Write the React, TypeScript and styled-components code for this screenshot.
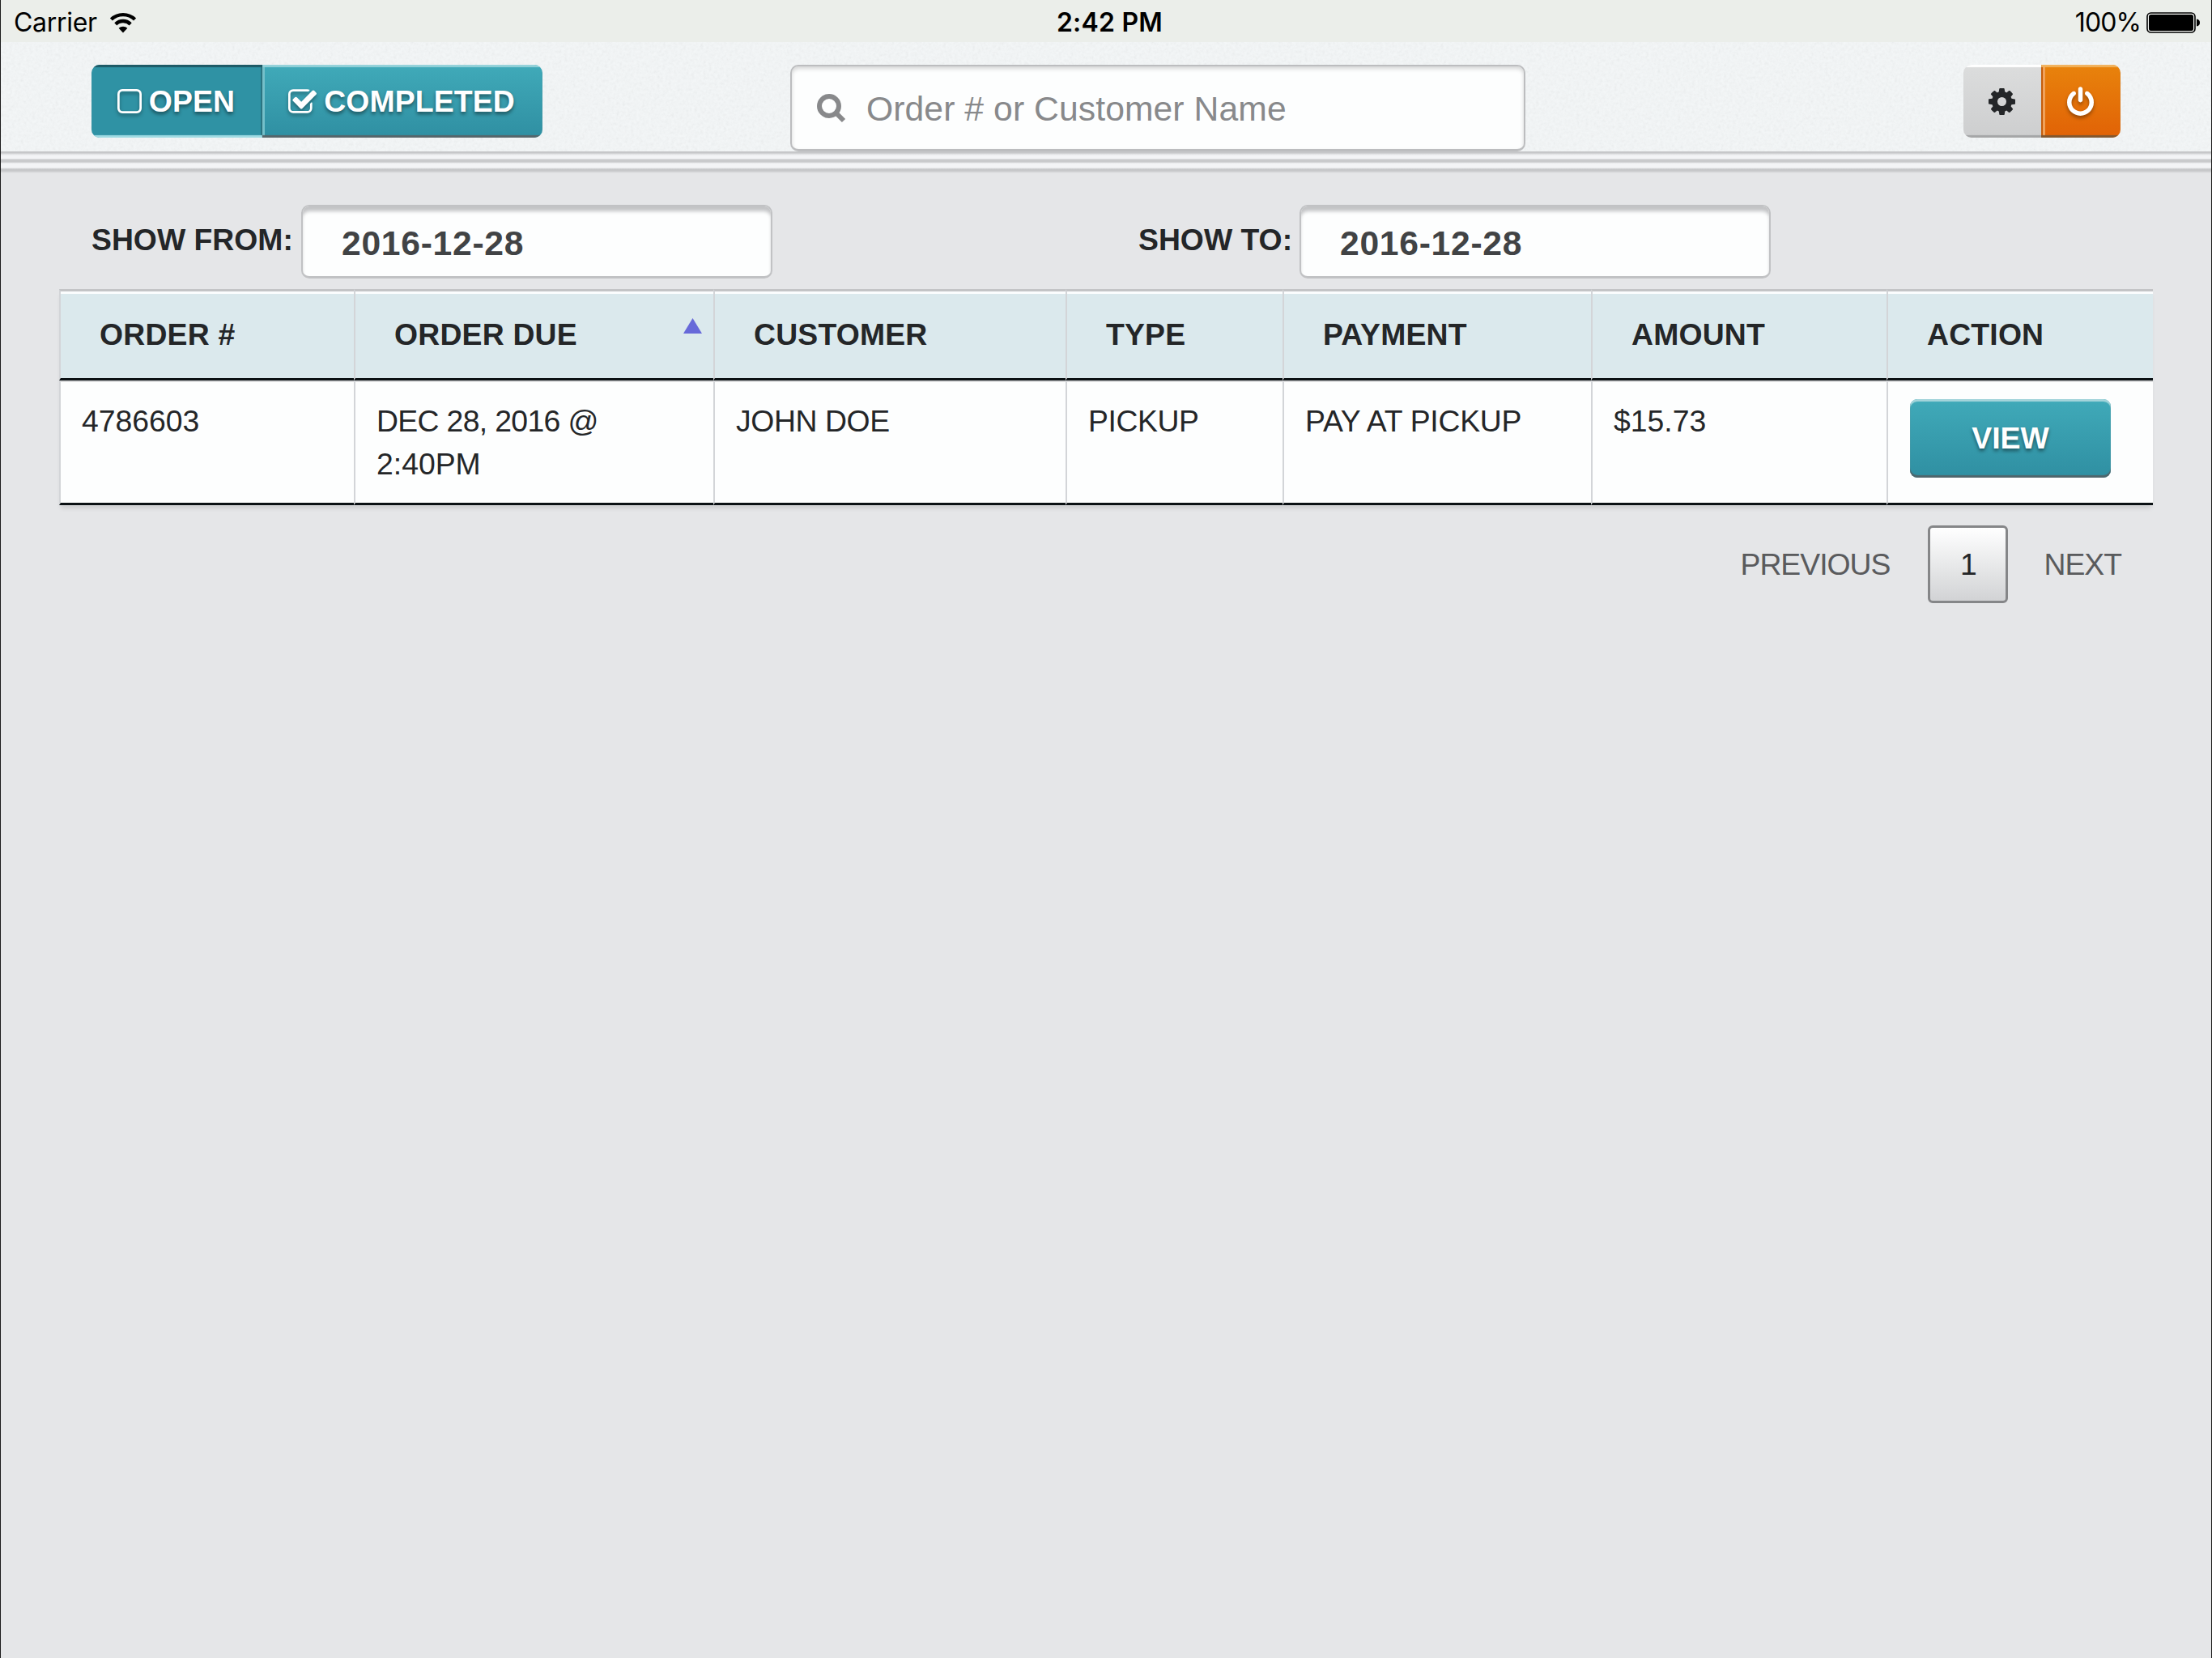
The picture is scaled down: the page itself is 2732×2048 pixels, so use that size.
import React from "react";
import styled, { createGlobalStyle, css } from "styled-components";

const color = {
  text: "#242628",
  muted: "#5a5b5d",
  page: "#e5e6e8",
  line: "#c3c4c6",
  divider: "#d3d5d8",
  head: "#dbe9ed",
  teal: "#2f92a4",
};

const font = {
  body: `"Liberation Sans", Arial, sans-serif`,
  system: `Inter, "Liberation Sans", sans-serif`,
};

const GlobalStyle = createGlobalStyle`
  * {
    box-sizing: border-box;
  }

  body {
    margin: 0;
    background: ${color.page};
  }
`;

const Screen = styled.div`
  width: 2732px;
  height: 2048px;
  overflow: hidden;
  border-left: 1px solid #1c1c1c;
  border-right: 1px solid #1c1c1c;
  background: ${color.page};
  color: ${color.text};
  font-family: ${font.body};
  font-size: 37.33px;
`;

const StatusBar = styled.div`
  display: grid;
  grid-template-columns: 1fr auto 1fr;
  align-items: center;
  height: 52px;
  padding: 4px 14px 0 16px;
  background: #ebeeea;
  color: #000;
  font-family: ${font.system};
  font-size: 32px;
  line-height: 48px;
`;

const Carrier = styled.div`
  display: flex;
  align-items: center;
  gap: 15px;
  letter-spacing: -0.3px;
`;

const Clock = styled.div`
  padding-left: 7px;
  font-weight: 600;
  letter-spacing: 0.2px;
`;

const Battery = styled.div`
  display: flex;
  align-items: center;
  justify-content: flex-end;
  gap: 7px;
  letter-spacing: -0.9px;
`;

const Toolbar = styled.header`
  position: relative;
  display: flex;
  align-items: flex-start;
  height: 135px;
  padding: 28px 112px 0;
  background: #f4f7f8;
`;

const Grain = styled.svg`
  position: absolute;
  inset: 0;
  width: 100%;
  height: 100%;
  opacity: 0.13;
`;

const Ridges = styled.div`
  height: 27px;
  background: linear-gradient(
    #c6c7c9 0 2px,
    #dcdddf 3px,
    #f3f4f6 5px 9px,
    #c9cacc 10px 13px,
    #f3f4f6 15px 20px,
    #c6c7c9 22px 24px,
    #dcdddf 26px,
    ${color.page} 27px
  );
`;

const ButtonGroup = styled.div`
  position: relative;
  display: flex;
  height: 90px;
  border-radius: 10px;
  overflow: hidden;
`;

type Tone = "pressed" | "teal" | "gray" | "orange";

const tones = {
  pressed: css`
    background: ${color.teal};
    color: #fff;
    box-shadow: inset 0 3px 1px #1d5a66, inset 0 -3px 1px #9fdbe3,
      inset -2px 0 0 #26727f;
    text-shadow: 0 3px 4px rgba(0, 0, 0, 0.45);
  `,
  teal: css`
    background: linear-gradient(#40aab9, #2f8fa2);
    color: #fff;
    box-shadow: inset 0 -3px 1px #56666b, inset 0 3px 1px #95d2da,
      inset 3px 0 0 #74c0ca;
    text-shadow: 0 3px 4px rgba(0, 0, 0, 0.45);
  `,
  gray: css`
    background: linear-gradient(#dcdddd, #cdcecf);
    color: ${color.text};
    box-shadow: inset 0 3px 1px #fff, inset 0 -3px 1px #a5a6a7;
  `,
  orange: css`
    background: linear-gradient(#e8830c, #e16206);
    color: #fff;
    box-shadow: inset 0 -3px 1px #82572f, inset 0 3px 1px #f2b35f,
      inset 2px 0 0 #c75a07, inset 5px 0 0 #f0a25a;
  `,
};

const GroupButton = styled.button<{ $tone: Tone; $width: number }>`
  display: flex;
  align-items: center;
  justify-content: center;
  width: ${({ $width }) => $width}px;
  padding: 0 2px 0 0;
  border: 0;
  font: bold 37.33px ${font.body};
  letter-spacing: 0.15px;
  ${({ $tone }) => tones[$tone]}
`;

const Label = styled.span`
  margin-left: 9px;
`;

const SearchBox = styled.div`
  position: relative;
  display: flex;
  align-items: center;
  width: 908px;
  height: 107px;
  margin: 0 auto 0 306px;
  padding: 2px 0 0 31px;
  border: 2px solid #bcbdbf;
  border-bottom-width: 3px;
  border-radius: 10px;
  background: #fdfefe;
  box-shadow: inset 0 3px 5px rgba(0, 0, 0, 0.16);
  color: #88898b;
  font-size: 42.67px;
  letter-spacing: 0.08px;
`;

const Placeholder = styled.span`
  margin-left: 25px;
`;

const Filters = styled.section`
  display: flex;
  height: 143px;
  padding: 39px 0 0 112px;
`;

const Field = styled.div<{ $width: number }>`
  display: flex;
  align-items: flex-start;
  justify-content: space-between;
  flex: none;
  width: ${({ $width }) => $width}px;
  margin-right: 452px;
`;

const FieldLabel = styled.label`
  font-weight: bold;
  line-height: 86px;
  white-space: nowrap;
`;

const DateInput = styled.div`
  width: 582px;
  height: 91px;
  padding: 3px 0 0 48px;
  border: 2px solid #c1c2c4;
  border-bottom-width: 3px;
  border-radius: 10px;
  background: #fdfefe;
  box-shadow: inset 0 7px 4px -1px #c3c4c6;
  color: #414345;
  font-size: 42.67px;
  font-weight: bold;
  letter-spacing: 0.7px;
  line-height: 84px;
`;

const Table = styled.table`
  width: 2586px;
  margin-left: 72px;
  border-spacing: 0;
  table-layout: fixed;
  box-shadow: 0 6px 5px -2px rgba(0, 0, 0, 0.1);
`;

const Th = styled.th<{ $width: number }>`
  width: ${({ $width }) => $width}px;
  height: 113px;
  padding: 0 0 0 48px;
  border-top: 3px solid ${color.line};
  border-bottom: 3px solid #0b1114;
  border-left: 2px solid ${color.divider};
  background: ${color.head};
  box-shadow: inset 0 3px 0 #fbfdfe;
  text-align: left;
  letter-spacing: 0.2px;
  line-height: 53px;
`;

const HeadContent = styled.div`
  display: flex;
  align-items: center;
  justify-content: space-between;
  padding-right: 14px;
`;

const SortArrow = styled.svg`
  margin-bottom: 22px;
`;

const Td = styled.td<{ $tracking?: number }>`
  height: 154px;
  padding: 24px 26px 0;
  border-bottom: 3px solid #0b1114;
  border-left: 2px solid ${color.divider};
  background: #fdfefe;
  box-shadow: inset 0 2px 0 #d9dadb;
  vertical-align: top;
  letter-spacing: ${({ $tracking = 0 }) => $tracking}px;
  line-height: 53.33px;
`;

const ActionCell = styled(Td)`
  padding: 23px 27px 0;
`;

const ViewButton = styled.button`
  display: block;
  width: 248px;
  height: 97px;
  padding: 0;
  border: 0;
  border-radius: 9px;
  background: linear-gradient(#40aab9, #2f8fa2);
  box-shadow: inset 0 -3px 1px #4f666c, inset 0 3px 1px #a5d5db;
  color: #fff;
  font: bold 37.33px ${font.body};
  text-shadow: 0 3px 4px rgba(0, 0, 0, 0.45);
`;

const Pager = styled.nav`
  display: flex;
  align-items: center;
  justify-content: flex-end;
  height: 96px;
  margin-top: 25px;
  padding-right: 111px;
  color: ${color.muted};
  letter-spacing: -1px;
`;

const PageNumber = styled.span`
  display: flex;
  align-items: center;
  justify-content: center;
  width: 99px;
  height: 96px;
  margin: 0 44px 0 47px;
  border: 3px solid #858688;
  border-radius: 6px;
  background: linear-gradient(#fff, #d2d3d5);
  color: ${color.text};
`;

const icons = {
  square: {
    box: "192 128 1408 1408",
    path: "M1312 256h-832q-66 0-113 47t-47 113v832q0 66 47 113t113 47h832q66 0 113-47t47-113v-832q0-66-47-113t-113-47zm288 160v832q0 119-84.5 203.5t-203.5 84.5h-832q-119 0-203.5-84.5t-84.5-203.5v-832q0-119 84.5-203.5t203.5-84.5h832q119 0 203.5 84.5t84.5 203.5z",
  },
  check: {
    box: "64 128 1664 1408",
    path: "M1472 930v318q0 119-84.5 203.5t-203.5 84.5h-832q-119 0-203.5-84.5t-84.5-203.5v-832q0-119 84.5-203.5t203.5-84.5h832q63 0 117 25 15 7 18 23 3 17-9 29l-49 49q-10 10-23 10-3 0-9-2-23-6-45-6h-832q-66 0-113 47t-47 113v832q0 66 47 113t113 47h832q66 0 113-47t47-113v-254q0-13 9-22l64-64q10-10 23-10 6 0 12 3 20 8 20 29zm231-489l-814 814q-24 24-57 24t-57-24l-430-430q-24-24-24-57t24-57l110-110q24-24 57-24t57 24l263 263 647-647q24-24 57-24t57 24l110 110q24 24 24 57t-24 57z",
  },
  cog: {
    box: "128 128 1536 1536",
    path: "M1152 896q0-106-75-181t-181-75-181 75-75 181 75 181 181 75 181-75 75-181zm512-109v222q0 12-8 23t-20 13l-185 28q-19 54-39 91 35 50 107 138 10 12 10 25t-9 23q-27 37-99 108t-94 71q-12 0-26-9l-138-108q-44 23-91 38-16 136-29 186-7 28-36 28h-222q-14 0-24.5-8.5t-11.5-21.5l-28-184q-49-16-90-37l-141 107q-10 9-25 9-14 0-25-11-126-114-165-168-7-10-7-23 0-12 8-23 15-21 51-66.5t54-70.5q-27-50-41-99l-183-27q-13-2-21-12.5t-8-23.5v-222q0-12 8-23t19-13l186-28q14-46 39-92-40-57-107-138-10-12-10-24 0-10 9-23 26-36 98.5-107.5t94.5-71.5q13 0 26 10l138 107q44-23 91-38 16-136 29-186 7-28 36-28h222q14 0 24.5 8.5t11.5 21.5l28 184q49 16 90 37l142-107q9-9 24-9 13 0 25 10 129 119 165 170 7 8 7 22 0 12-8 23-15 21-51 66.5t-54 70.5q26 50 41 98l183 28q13 2 21 12.5t8 23.5z",
  },
  power: {
    box: "128 0 1536 1664",
    path: "M1664 896q0 156-61 298t-164 245-245 164-298 61-298-61-245-164-164-245-61-298q0-182 80.5-343t226.5-270q43-32 95.5-25t83.5 50q32 42 24.5 94.5t-49.5 84.5q-98 74-151.5 181t-53.5 228q0 104 40.5 198.5t109.5 163.5 163.5 109.5 198.5 40.5 198.5-40.5 163.5-109.5 109.5-163.5 40.5-198.5q0-121-53.5-228t-151.5-181q-42-32-49.5-84.5t24.5-94.5q31-43 84-50t95 25q146 109 226.5 270t80.5 343zm-640-768v640q0 52-38 90t-90 38-90-38-38-90v-640q0-52 38-90t90-38 90 38 38 90z",
  },
};

interface IconProps {
  name: keyof typeof icons;
  width: number;
  height: number;
  shadow?: boolean;
}

const IconSvg = styled.svg<{ $shadow?: boolean }>`
  flex: none;
  fill: currentColor;
  filter: ${({ $shadow }) =>
    $shadow ? "drop-shadow(0 3px 2px rgba(0, 0, 0, 0.35))" : "none"};
`;

const Icon: React.FC<IconProps> = ({ name, width, height, shadow }) => (
  <IconSvg
    width={width}
    height={height}
    viewBox={icons[name].box}
    $shadow={shadow}
  >
    <path d={icons[name].path} />
  </IconSvg>
);

const SearchIcon = () => (
  <svg width="36" height="36" viewBox="0 0 36 36">
    <g fill="none" stroke="#88898b">
      <circle cx="15" cy="15" r="12" strokeWidth="6" />
      <path d="M23.5 23.5L33 33" strokeWidth="6" />
    </g>
  </svg>
);

const WifiIcon = () => (
  <svg width="34" height="26" viewBox="0 0 34 26">
    <g fill="none" stroke="#000" strokeWidth="4.4">
      <path d="M2.4 9a21 21 0 0 1 29.2 0" />
      <path d="M7.8 14.8a13.2 13.2 0 0 1 18.4 0" />
    </g>
    <path d="M17 25.4l-5.4-5.6a7.8 7.8 0 0 1 10.8 0z" />
  </svg>
);

const BatteryIcon = () => (
  <svg width="66" height="26" viewBox="0 0 66 26">
    <rect x="1" y="1" width="59" height="24" rx="4.5" fill="#f4f6f3" stroke="#000" strokeWidth="1.6" />
    <rect x="3" y="3" width="55" height="20" rx="2.5" />
    <path d="M62 8.5q4 .8 4 4.5t-4 4.5z" />
  </svg>
);

const DueDay = styled.span`
  letter-spacing: -0.65px;
`;

const columns = [
  { title: "ORDER #", width: 364 },
  { title: "ORDER DUE", width: 444, sorted: true },
  { title: "CUSTOMER", width: 435 },
  { title: "TYPE", width: 268 },
  { title: "PAYMENT", width: 381 },
  { title: "AMOUNT", width: 365 },
  { title: "ACTION", width: 329 },
];

const orders = [
  {
    id: "4786603",
    day: "DEC 28, 2016 @",
    time: "2:40PM",
    customer: "JOHN DOE",
    type: "PICKUP",
    payment: "PAY AT PICKUP",
    amount: "$15.73",
  },
];

const App: React.FC = () => (
  <Screen>
    <GlobalStyle />
    <StatusBar>
      <Carrier>
        Carrier
        <WifiIcon />
      </Carrier>
      <Clock>2:42 PM</Clock>
      <Battery>
        100%
        <BatteryIcon />
      </Battery>
    </StatusBar>

    <Toolbar>
      <Grain>
        <filter id="grain">
          <feTurbulence type="fractalNoise" baseFrequency="0.28" numOctaves="3" />
          <feColorMatrix type="saturate" values="0" />
        </filter>
        <rect width="100%" height="100%" filter="url(#grain)" />
      </Grain>
      <ButtonGroup>
        <GroupButton $tone="pressed" $width={211}>
          <Icon name="square" width={30} height={30} shadow />
          <Label>OPEN</Label>
        </GroupButton>
        <GroupButton $tone="teal" $width={346}>
          <Icon name="check" width={35} height={30} shadow />
          <Label>COMPLETED</Label>
        </GroupButton>
      </ButtonGroup>
      <SearchBox>
        <SearchIcon />
        <Placeholder>Order # or Customer Name</Placeholder>
      </SearchBox>
      <ButtonGroup>
        <GroupButton $tone="gray" $width={96}>
          <Icon name="cog" width={33} height={33} />
        </GroupButton>
        <GroupButton $tone="orange" $width={98}>
          <Icon name="power" width={33} height={36} shadow />
        </GroupButton>
      </ButtonGroup>
    </Toolbar>
    <Ridges />

    <Filters>
      <Field $width={841}>
        <FieldLabel>SHOW FROM:</FieldLabel>
        <DateInput>2016-12-28</DateInput>
      </Field>
      <Field $width={781}>
        <FieldLabel>SHOW TO:</FieldLabel>
        <DateInput>2016-12-28</DateInput>
      </Field>
    </Filters>

    <Table>
      <thead>
        <tr>
          {columns.map(({ title, width, sorted }) => (
            <Th key={title} $width={width}>
              <HeadContent>
                {title}
                {sorted && (
                  <SortArrow width="23" height="19" viewBox="0 0 23 19">
                    <path d="M11.5 0L23 19H0z" fill="#6769d9" />
                  </SortArrow>
                )}
              </HeadContent>
            </Th>
          ))}
        </tr>
      </thead>
      <tbody>
        {orders.map((order) => (
          <tr key={order.id}>
            <Td>{order.id}</Td>
            <Td>
              <DueDay>{order.day}</DueDay> {order.time}
            </Td>
            <Td $tracking={-0.4}>{order.customer}</Td>
            <Td $tracking={-0.4}>{order.type}</Td>
            <Td $tracking={-0.25}>{order.payment}</Td>
            <Td>{order.amount}</Td>
            <ActionCell>
              <ViewButton>VIEW</ViewButton>
            </ActionCell>
          </tr>
        ))}
      </tbody>
    </Table>

    <Pager>
      <span>PREVIOUS</span>
      <PageNumber>1</PageNumber>
      <span>NEXT</span>
    </Pager>
  </Screen>
);

export default App;
